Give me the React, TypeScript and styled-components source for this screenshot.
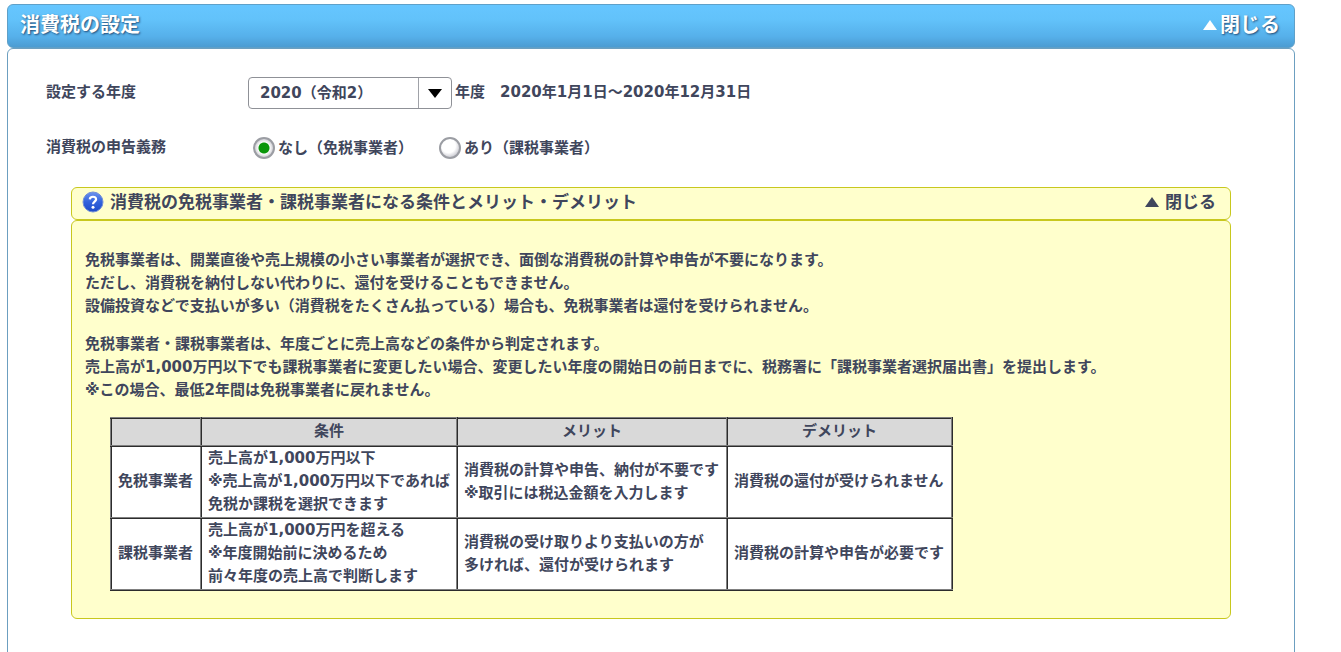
import React, { useState } from "react";
import styled, { createGlobalStyle } from "styled-components";

const ink = "#40465c";

const GlobalStyle = createGlobalStyle`
  *, *::before, *::after { box-sizing: border-box; }
  body {
    margin: 0;
    background: #fff;
    color: ${ink};
    font: bold 15px/23px "DejaVu Sans", "Noto Sans CJK JP", sans-serif;
  }
  button, select, input { font: inherit; color: inherit; }
`;

const Page = styled.main`
  margin: 4px 46px 0 7px;
`;

const PanelHeader = styled.header`
  display: flex;
  justify-content: space-between;
  align-items: center;
  height: 44px;
  padding: 0 14px 2px 12px;
  border: 1px solid #5fa0c8;
  border-radius: 6px;
  background: linear-gradient(#66c6ff 0%, #62c2fa 35%, #56b0ea 75%, #4c9cd2 100%);
  color: #fff;
  text-shadow: 1px 1px 2px rgba(20, 50, 90, 0.8);
`;

const PanelTitle = styled.h1`
  margin: 0;
  font-size: 20px;
  line-height: 28px;
`;

const ToggleButton = styled.button<{ $size: number; $gap: number }>`
  display: flex;
  align-items: center;
  gap: ${(p) => p.$gap}px;
  padding: 0;
  border: 0;
  background: none;
  font-size: ${(p) => p.$size}px;
  line-height: 28px;
  text-shadow: inherit;
  cursor: pointer;
`;

const PanelBody = styled.div`
  padding: 28px 63px 60px;
  border: 1px solid #6c9fc0;
  border-radius: 6px;
`;

const Field = styled.div`
  display: grid;
  grid-template-columns: 202px 1fr;
  align-items: center;
  min-height: 32px;
  margin: 0 0 23px -25px;
`;

const FieldLabel = styled.label`
  padding-bottom: 2px;
`;

const FieldContent = styled.div`
  display: flex;
  align-items: center;
`;

const SelectBox = styled.div`
  display: grid;
  grid-template-columns: 169px 33px;
  align-items: center;
  height: 32px;
  border: 1px solid #8f9197;
  border-radius: 4px;
  svg {
    grid-area: 1 / 2;
    justify-self: center;
    color: #000;
    pointer-events: none;
  }
  &::after {
    content: "";
    grid-area: 1 / 2;
    height: 30px;
    border-left: 1px solid #a0a2a8;
    pointer-events: none;
  }
`;

const YearSelect = styled.select`
  grid-area: 1 / 1 / 2 / 3;
  height: 30px;
  padding: 0 40px 0 11px;
  border: 0;
  background: none;
  appearance: none;
`;

const Unit = styled.span`
  padding: 0 15px 2px 3px;
`;

const Period = styled.span`
  padding-bottom: 2px;
`;

const Choice = styled.label`
  display: flex;
  align-items: center;
  gap: 3px;
  margin: 0 21px 0 5px;
`;

const Radio = styled.input`
  width: 22px;
  height: 22px;
  margin: 0;
  border: 2px solid #9b9da3;
  border-radius: 50%;
  appearance: none;
  background: radial-gradient(circle at 42% 38%, #fff 45%, #c4c4cc 80%);
  &:checked {
    background:
      radial-gradient(circle, #0a960a 5px, transparent 6px),
      radial-gradient(circle, #fff 45%, #c8c8ce 75%);
  }
`;

const HelpHeader = styled.div`
  display: flex;
  align-items: center;
  height: 33px;
  margin-top: 20px;
  padding: 0 14px 3px 10px;
  border: 1px solid #c8c81e;
  border-radius: 6px;
  background: #ffffcc;
`;

const HelpTitle = styled.h2`
  flex: 1;
  margin: 0 0 0 6px;
  font-size: 17px;
  line-height: 28px;
`;

const HelpBody = styled.div`
  padding: 28px 13px 27px;
  border: 1px solid #c8c81e;
  border-radius: 6px;
  background: #ffffcc;
`;

const Paragraph = styled.p`
  margin: 0 0 15px;
`;

const Comparison = styled.table`
  margin-left: 25px;
  border-collapse: collapse;
  white-space: nowrap;
`;

const Cell = styled.td`
  height: 72px;
  padding: 0 0 1px 6px;
  border: 2px ridge #808080;
  background: #fff;
  text-align: left;
`;

const HeadCell = styled.th<{ $width: number }>`
  width: ${(p) => p.$width}px;
  height: 28px;
  padding: 0 0 2px;
  border: 2px ridge #808080;
  background: #d9d9d9;
`;

function Triangle({ down = false }: { down?: boolean }) {
  return (
    <svg width="14" height="10" viewBox="0 0 14 10" aria-hidden="true">
      <path d={down ? "M0 1H14L7 10Z" : "M7 0L14 10H0Z"} fill="currentColor" />
    </svg>
  );
}

function HelpIcon() {
  return (
    <svg width="22" height="22" viewBox="0 0 22 22" aria-hidden="true">
      <defs>
        <linearGradient id="ball" x1="0" y1="0" x2="0" y2="1">
          <stop offset="0" stopColor="#6d94ee" />
          <stop offset="0.5" stopColor="#3263dc" />
          <stop offset="1" stopColor="#1c49c8" />
        </linearGradient>
      </defs>
      <circle cx="11" cy="11" r="10" fill="url(#ball)" stroke="#7390d8" />
      <path d="M7.8 8.4C7.9 4.8 14.2 4.9 14.1 8.4C14 10.6 11 10.7 11 13.2" fill="none" stroke="#fff" strokeWidth="2.2" />
      <circle cx="11" cy="16.3" r="1.5" fill="#fff" />
    </svg>
  );
}

const rows = [
  {
    name: "免税事業者",
    cells: [
      ["売上高が1,000万円以下", "※売上高が1,000万円以下であれば", "免税か課税を選択できます"],
      ["消費税の計算や申告、納付が不要です", "※取引には税込金額を入力します"],
      ["消費税の還付が受けられません"],
    ],
  },
  {
    name: "課税事業者",
    cells: [
      ["売上高が1,000万円を超える", "※年度開始前に決めるため", "前々年度の売上高で判断します"],
      ["消費税の受け取りより支払いの方が", "多ければ、還付が受けられます"],
      ["消費税の計算や申告が必要です"],
    ],
  },
];

export default function App() {
  const [duty, setDuty] = useState("none");
  return (
    <>
      <GlobalStyle />
      <Page>
        <PanelHeader>
          <PanelTitle>消費税の設定</PanelTitle>
          <ToggleButton $size={20} $gap={3}>
            <Triangle />
            閉じる
          </ToggleButton>
        </PanelHeader>
        <PanelBody>
          <Field>
            <FieldLabel htmlFor="year">設定する年度</FieldLabel>
            <FieldContent>
              <SelectBox>
                <YearSelect id="year">
                  <option>2020（令和2）</option>
                </YearSelect>
                <Triangle down />
              </SelectBox>
              <Unit>年度</Unit>
              <Period>2020年1月1日～2020年12月31日</Period>
            </FieldContent>
          </Field>
          <Field role="radiogroup" aria-labelledby="duty">
            <FieldLabel as="span" id="duty">消費税の申告義務</FieldLabel>
            <FieldContent>
              <Choice>
                <Radio type="radio" name="duty" checked={duty === "none"} onChange={() => setDuty("none")} />
                <span>なし（免税事業者）</span>
              </Choice>
              <Choice>
                <Radio type="radio" name="duty" checked={duty === "taxed"} onChange={() => setDuty("taxed")} />
                <span>あり（課税事業者）</span>
              </Choice>
            </FieldContent>
          </Field>
          <HelpHeader>
            <HelpIcon />
            <HelpTitle>消費税の免税事業者・課税事業者になる条件とメリット・デメリット</HelpTitle>
            <ToggleButton $size={17} $gap={6}>
              <Triangle />
              閉じる
            </ToggleButton>
          </HelpHeader>
          <HelpBody>
            <Paragraph>
              免税事業者は、開業直後や売上規模の小さい事業者が選択でき、面倒な消費税の計算や申告が不要になります。<br />
              ただし、消費税を納付しない代わりに、還付を受けることもできません。<br />
              設備投資などで支払いが多い（消費税をたくさん払っている）場合も、免税事業者は還付を受けられません。
            </Paragraph>
            <Paragraph>
              免税事業者・課税事業者は、年度ごとに売上高などの条件から判定されます。<br />
              売上高が1,000万円以下でも課税事業者に変更したい場合、変更したい年度の開始日の前日までに、税務署に「課税事業者選択届出書」を提出します。<br />
              ※この場合、最低2年間は免税事業者に戻れません。
            </Paragraph>
            <Comparison>
              <thead>
                <tr>
                  <HeadCell $width={90} />
                  <HeadCell $width={256}>条件</HeadCell>
                  <HeadCell $width={270}>メリット</HeadCell>
                  <HeadCell $width={225}>デメリット</HeadCell>
                </tr>
              </thead>
              <tbody>
                {rows.map((row) => (
                  <tr key={row.name}>
                    <Cell as="th" scope="row">{row.name}</Cell>
                    {row.cells.map((lines) => (
                      <Cell key={lines[0]}>
                        {lines.map((line) => (
                          <div key={line}>{line}</div>
                        ))}
                      </Cell>
                    ))}
                  </tr>
                ))}
              </tbody>
            </Comparison>
          </HelpBody>
        </PanelBody>
      </Page>
    </>
  );
}
